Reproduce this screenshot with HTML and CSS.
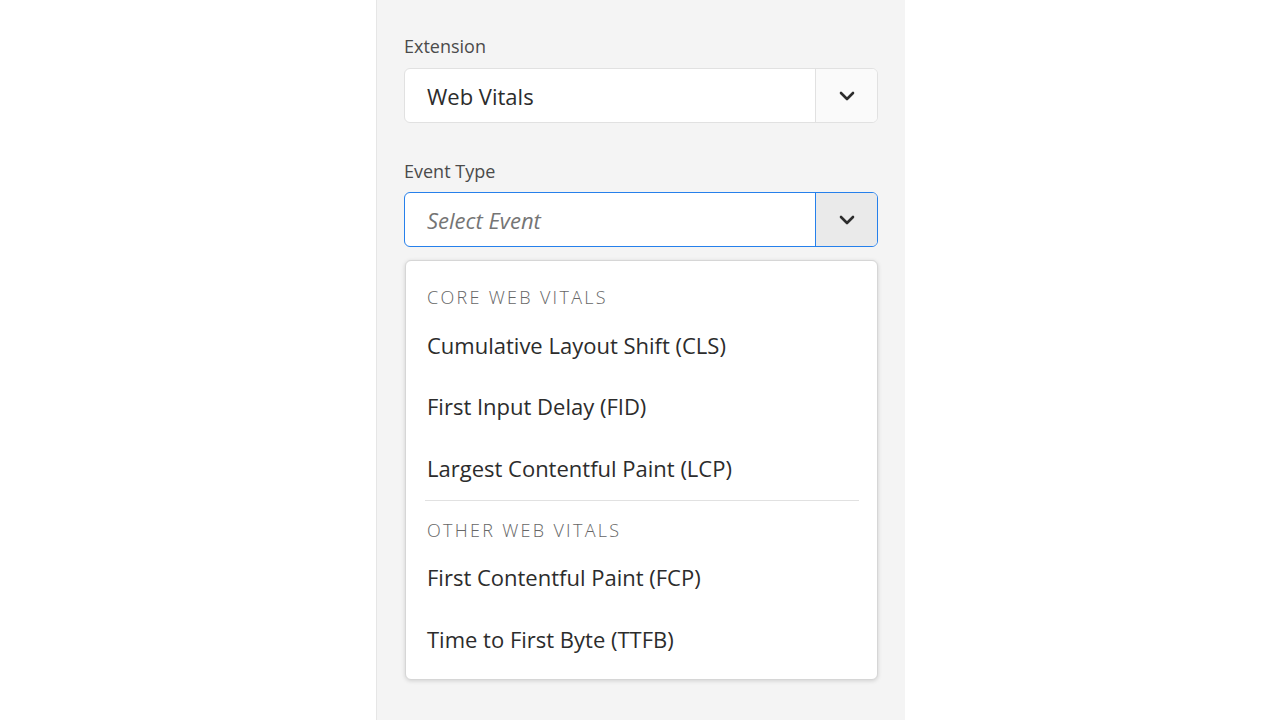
FILE: index.html
```html
<!DOCTYPE html>
<html>
<head>
<meta charset="utf-8">
<link rel="stylesheet" href="styles.css">
</head>
<body>
<div class="page">
  <div class="panel">
    <div class="label">Extension</div>
    <div class="field">
      <div class="value">Web Vitals</div>
      <div class="btn">
        <svg width="18" height="12" viewBox="0 0 18 12"><path d="M3 3 L9 9 L15 3" fill="none" stroke="#2c2c2c" stroke-width="2.6" stroke-linecap="round" stroke-linejoin="round"/></svg>
      </div>
    </div>
    <div class="label second">Event Type</div>
    <div class="field focused">
      <div class="value placeholder">Select Event</div>
      <div class="btn">
        <svg width="18" height="12" viewBox="0 0 18 12"><path d="M3 3 L9 9 L15 3" fill="none" stroke="#2c2c2c" stroke-width="2.6" stroke-linecap="round" stroke-linejoin="round"/></svg>
      </div>
    </div>
    <div class="menu">
      <div class="heading">CORE WEB VITALS</div>
      <div class="item">Cumulative Layout Shift (CLS)</div>
      <div class="item">First Input Delay (FID)</div>
      <div class="item">Largest Contentful Paint (LCP)</div>
      <div class="divider"></div>
      <div class="heading">OTHER WEB VITALS</div>
      <div class="item">First Contentful Paint (FCP)</div>
      <div class="item">Time to First Byte (TTFB)</div>
    </div>
  </div>
</div>
</body>
</html>
```
FILE: styles.css
```css
html, body {
  margin: 0;
  padding: 0;
  background: #ffffff;
}
body {
  font-family: "Open Sans", "Noto Sans", sans-serif;
  color: #2c2c2c;
}
.page {
  display: flex;
  height: 720px;
  padding-left: 376px;
}
.panel {
  width: 529px;
  height: 720px;
  box-sizing: border-box;
  background: #f4f4f4;
  border-left: 1px solid #e6e6e6;
  padding: 35px 27px 0 27px;
  display: flex;
  flex-direction: column;
}
.label {
  font-size: 18px;
  line-height: 22px;
  color: #4b4b4b;
  margin-bottom: 11px;
}
.label.second {
  margin-top: 37px;
  margin-bottom: 10px;
}
.field {
  display: flex;
  height: 55px;
  flex: none;
  box-sizing: border-box;
  border: 1px solid #e1e1e1;
  border-radius: 6px;
  background: #ffffff;
  overflow: hidden;
}
.value {
  flex: 1;
  display: flex;
  align-items: center;
  padding-left: 22px;
  font-size: 22px;
  color: #2c2c2c;
}
.placeholder {
  font-style: italic;
  color: #757575;
}
.btn {
  width: 61px;
  border-left: 1px solid #e1e1e1;
  background: #fafafa;
  display: flex;
  align-items: center;
  justify-content: center;
}
.field.focused {
  border-color: #2680eb;
}
.field.focused .btn {
  border-left-color: #2680eb;
  background: #eaeaea;
}
.menu {
  margin-top: 13px;
  margin-left: 1px;
  height: 420px;
  flex: none;
  box-sizing: border-box;
  background: #ffffff;
  border: 1px solid #d6d6d6;
  border-radius: 6px;
  box-shadow: 0 1px 4px rgba(0, 0, 0, 0.15);
  padding-top: 19px;
  display: flex;
  flex-direction: column;
}
.heading {
  height: 34px;
  flex: none;
  display: flex;
  align-items: center;
  padding-left: 21px;
  font-size: 18px;
  font-weight: 300;
  letter-spacing: 2.3px;
  color: #666666;
}
.item {
  height: 61.5px;
  flex: none;
  display: flex;
  align-items: center;
  padding-left: 21px;
  font-size: 22px;
  color: #2c2c2c;
}
.divider {
  height: 1px;
  flex: none;
  background: #e1e1e1;
  margin: 1px 18px 12px 19px;
}
```
